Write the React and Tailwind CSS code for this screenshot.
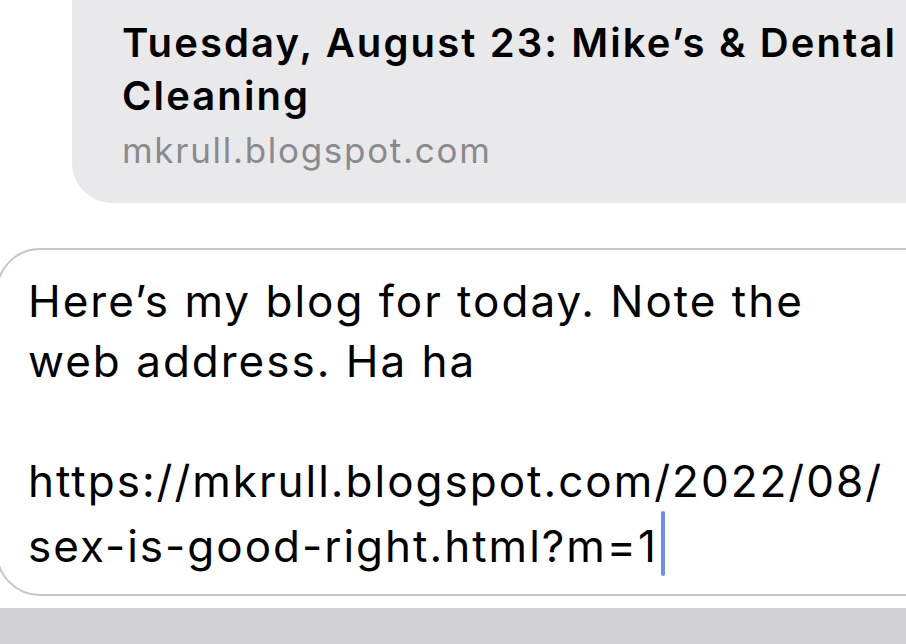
import React from 'react';

const App = () => {
  return (
    <div className="w-[906px] h-[644px] bg-white overflow-hidden flex flex-col font-['Inter',sans-serif] text-black">
      <div className="pl-[72px] h-[203px] shrink-0">
        <div className="bg-[#e9e9eb] rounded-bl-[40px] h-full pl-[50px] pt-[16px] whitespace-nowrap">
          <h1 className="text-[40px] leading-[53px] font-semibold tracking-[2.1px]">
            Tuesday, August 23: Mike’s &amp; Dental
            <br />
            Cleaning
          </h1>
          <p className="mt-[2px] text-[35px] leading-[53px] tracking-[1.7px] text-[#8a8a8e]">mkrull.blogspot.com</p>
        </div>
      </div>

      <div className="mt-[45px] ml-[-4px] mr-[-60px] h-[348px] shrink-0 border-2 border-[#c6c6c8] rounded-[44px] pl-[30px] pt-[21px] whitespace-nowrap">
        <p className="text-[44px] leading-[60px] tracking-[2px]">
          Here’s my blog for today. Note the
          <br />
          web address. Ha ha
          <br />
          <br />
          https://mkrull.blogspot.com/2022/08/
          <br />
          sex-is-good-right.html?m=1
          <span className="inline-block w-[4px] h-[65px] bg-[#6d8ee6] rounded-full align-[-14px] ml-[3px]" />
        </p>
      </div>

      <div className="mt-auto h-[36px] bg-[#d1d1d6]" />
    </div>
  );
};

export default App;
